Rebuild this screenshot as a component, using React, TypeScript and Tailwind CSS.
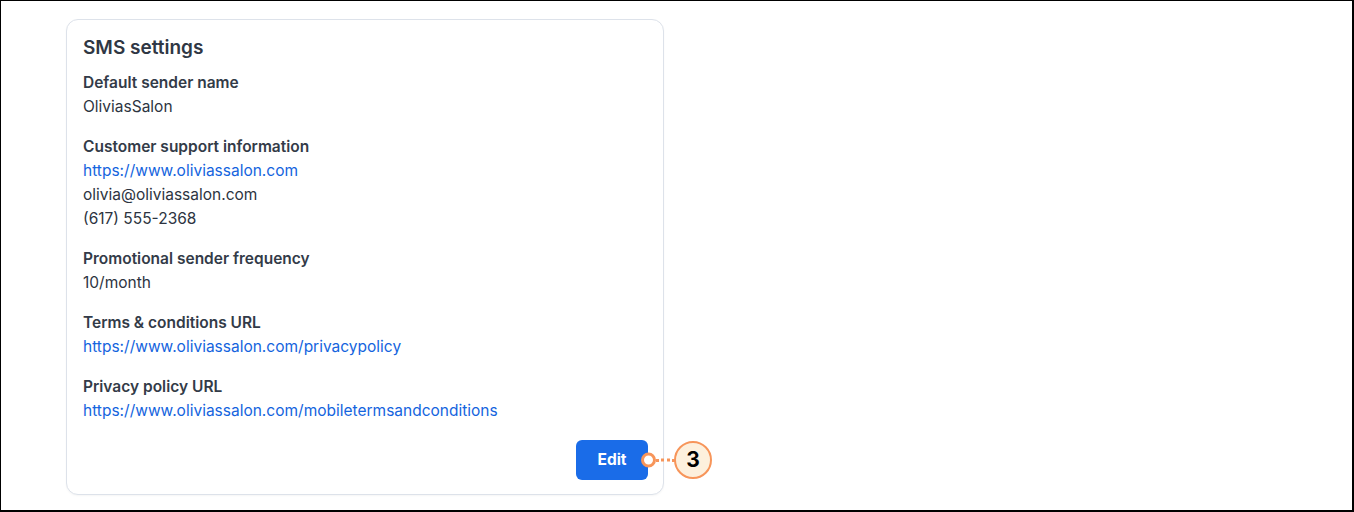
export default function App() {
  const sections: { label: string; lines: { text: string; link?: boolean }[] }[] = [
    { label: "Default sender name", lines: [{ text: "OliviasSalon" }] },
    {
      label: "Customer support information",
      lines: [
        { text: "https://www.oliviassalon.com", link: true },
        { text: "olivia@oliviassalon.com" },
        { text: "(617) 555-2368" },
      ],
    },
    { label: "Promotional sender frequency", lines: [{ text: "10/month" }] },
    {
      label: "Terms & conditions URL",
      lines: [{ text: "https://www.oliviassalon.com/privacypolicy", link: true }],
    },
    {
      label: "Privacy policy URL",
      lines: [{ text: "https://www.oliviassalon.com/mobiletermsandconditions", link: true }],
    },
  ];

  return (
    <div
      className="w-[1354px] h-[512px] bg-white border border-black border-r-2 border-b-2 pl-[65px] pt-[18px]"
      style={{ fontFamily: "Inter, 'Noto Sans', sans-serif" }}
    >
      <div className="relative w-[598px] rounded-xl border border-[#dde2ea] bg-white pl-4 pr-4 pt-[14px] pb-[14px] shadow-[0_1px_2px_rgba(0,0,0,0.04)]">
        <h2 className="text-[19px] leading-[28px] font-semibold text-[#2f3744] mb-[9px]">SMS settings</h2>
        <div className="flex flex-col gap-4">
          {sections.map((s) => (
            <div key={s.label} className="text-[15.5px] leading-[24px]">
              <div className="font-semibold text-[#333b48]">{s.label}</div>
              {s.lines.map((l) =>
                l.link ? (
                  <a key={l.text} href="#" className="block text-[#1464de]">
                    {l.text}
                  </a>
                ) : (
                  <div key={l.text} className="text-[#2d3441]">
                    {l.text}
                  </div>
                )
              )}
            </div>
          ))}
        </div>
        <div className="flex justify-end mt-[17px]">
          <button className="relative w-[72px] h-10 rounded-md bg-[#1a6ce8] text-white text-[15.5px] font-bold -mr-[1px]">
            Edit
            <span className="absolute right-[-8px] top-1/2 -translate-y-1/2 w-[15px] h-[15px] rounded-full bg-white border-[3px] border-[#f7955a]" />
            <span className="absolute left-[80px] top-1/2 -translate-y-1/2 w-[19px] border-t-[3px] border-dotted border-[#f7955a]" />
            <span className="absolute left-[98px] top-1/2 -translate-y-1/2 w-[38px] h-[38px] rounded-full bg-[#fdf0dd] border-2 border-[#f7955a] flex items-center justify-center text-black text-[21px] font-bold">
              3
            </span>
          </button>
        </div>
      </div>
    </div>
  );
}
